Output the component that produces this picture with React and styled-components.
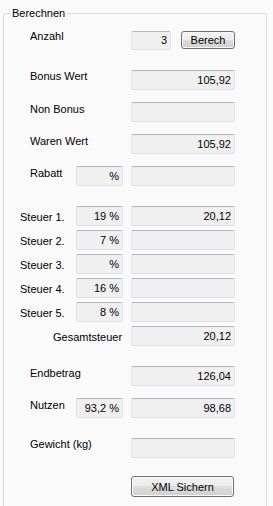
import React from "react";
import styled, { createGlobalStyle } from "styled-components";

const GlobalStyle = createGlobalStyle`
  html, body {
    margin: 0;
    padding: 0;
    background: #fafafa;
    overflow: hidden;
  }
  body {
    font-family: "Liberation Sans", Arial, sans-serif;
    font-size: 11px;
    color: #000;
  }
`;

// top = gap above the row, lx = label x, lt = label nudge
const rows = [
  { label: "Anzahl", gap: 11, lx: 26, lt: -1, anzahl: true },
  { label: "Bonus Wert", gap: 19, lx: 26, lt: 0, value: "105,92" },
  { label: "Non Bonus", gap: 12, lx: 26, lt: 1, value: "" },
  { label: "Waren Wert", gap: 12, lx: 26, lt: 1, value: "105,92" },
  { label: "Rabatt", gap: 12, lx: 26, lt: 1, pct: "%", value: "" },
  { label: "Steuer 1.", gap: 20, lx: 16, lt: 5, pct: "19 %", value: "20,12" },
  { label: "Steuer 2.", gap: 4, lx: 16, lt: 5, pct: "7 %", value: "" },
  { label: "Steuer 3.", gap: 4, lx: 16, lt: 5, pct: "%", value: "" },
  { label: "Steuer 4.", gap: 4, lx: 16, lt: 5, pct: "16 %", value: "" },
  { label: "Steuer 5.", gap: 4, lx: 16, lt: 5, pct: "8 %", value: "" },
  { label: "Gesamtsteuer", gap: 4, lx: 49, lt: 5, value: "20,12" },
  { label: "Endbetrag", gap: 20, lx: 26, lt: 1, value: "126,04" },
  { label: "Nutzen", gap: 12, lx: 26, lt: 1, pct: "93,2 %", value: "98,68" },
  { label: "Gewicht (kg)", gap: 20, lx: 26, lt: 0, value: "" },
];

export default function App() {
  return (
    <>
      <GlobalStyle />
      <GroupBox>
        <Legend>Berechnen</Legend>
        {rows.map((r) => (
          <Row key={r.label} $gap={r.gap}>
            <Label $x={r.lx} $top={r.lt} $wide={!r.pct}>
              {r.label}
            </Label>
            {r.pct && <SmallField>{r.pct}</SmallField>}
            {r.anzahl ? (
              <Cell>
                <Field $width={40} $height={19}>
                  3
                </Field>
                <Button $width={54} $height={18}>
                  Berech
                </Button>
              </Cell>
            ) : (
              <Field>{r.value}</Field>
            )}
          </Row>
        ))}
        <Row $gap={18}>
          <Cell>
            <Button $width={103} $height={21}>
              XML Sichern
            </Button>
          </Cell>
        </Row>
      </GroupBox>
    </>
  );
}

const GroupBox = styled.fieldset`
  margin: 7px 0 0 3px;
  padding: 0;
  width: 264px;
  min-height: 560px;
  box-sizing: border-box;
  border: 1px solid #d5dfe5;
  border-radius: 3px;
`;

const Legend = styled.legend`
  margin-left: 6px;
  padding: 0 2px;
  line-height: 13px;
  font-size: 11px;
`;

const Row = styled.div`
  display: grid;
  grid-template-columns: 72px 47px 8px 104px;
  height: 20px;
  margin-top: ${(p) => p.$gap}px;
`;

const Label = styled.div`
  grid-column: ${(p) => (p.$wide ? "1 / span 2" : "1")};
  padding-left: ${(p) => p.$x}px;
  margin-top: ${(p) => p.$top}px;
  line-height: 13px;
  white-space: nowrap;
`;

const Box = styled.div`
  box-sizing: border-box;
  height: ${(p) => p.$height || 20}px;
  background: #f0f0f0;
  border: 1px solid #dde2e7;
  border-top-color: #b4b8be;
  border-radius: 2px;
  text-align: right;
  padding-right: 3px;
  line-height: ${(p) => (p.$height || 20) - 2}px;
  white-space: nowrap;
`;

const SmallField = styled(Box)`
  grid-column: 2;
`;

const Field = styled(Box)`
  grid-column: 4;
  width: ${(p) => (p.$width ? `${p.$width}px` : "auto")};
`;

const Cell = styled.div`
  grid-column: 4;
  display: flex;
  justify-content: space-between;
  align-items: flex-start;
`;

const Button = styled.button`
  box-sizing: border-box;
  width: ${(p) => p.$width}px;
  height: ${(p) => p.$height}px;
  padding: 0;
  font-family: "Liberation Sans", Arial, sans-serif;
  font-size: 11px;
  color: #000;
  border: 1px solid #707070;
  border-radius: 3px;
  background: linear-gradient(#f3f3f3 0%, #ebebeb 50%, #dddddd 50%, #cfcfcf 100%);
  box-shadow: inset 0 0 0 1px #fbfbfb;
`;
